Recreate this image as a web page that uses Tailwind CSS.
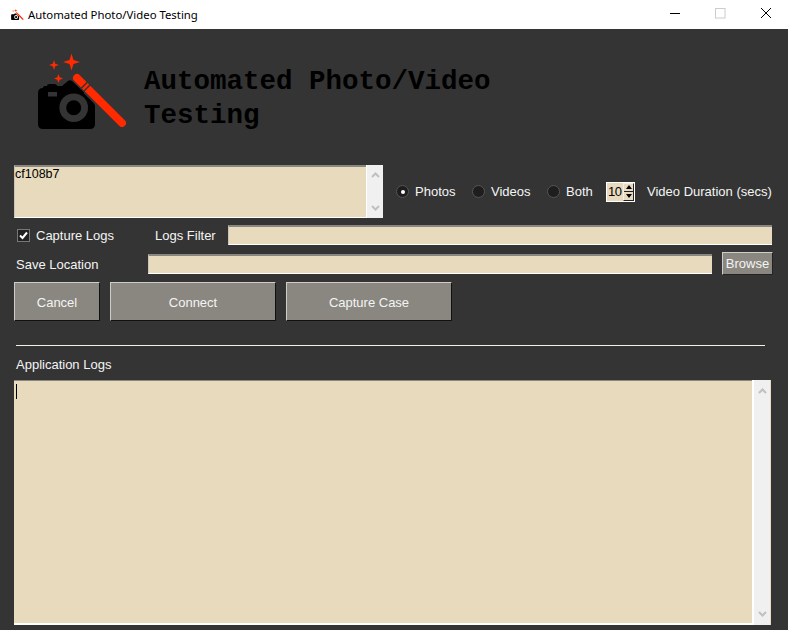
<!DOCTYPE html>
<html>
<head>
<meta charset="utf-8">
<script src="https://cdn.jsdelivr.net/npm/@tailwindcss/browser@4"></script>
</head>
<body class="m-0">
<div class="w-[788px] h-[630px] overflow-hidden flex flex-col bg-[#343434] text-[13px] leading-[16px] text-[#f4f4f4] font-['Liberation_Sans',Arial,sans-serif]">
  <!-- title bar -->
  <div class="h-[29px] shrink-0 bg-white flex items-center text-black">
    <svg class="ml-[10px] w-[14px] h-[14px]" viewBox="30 48 100 90">
      <path d="M43 88H57L68 81L95 103V124Q95 129 90 129H43Q38 129 38 124V93Q38 88 43 88Z" fill="#000"/>
      <circle cx="73.700" cy="107.700" r="14" fill="#fff"/>
      <circle cx="73.700" cy="107.700" r="8" fill="#000"/>
      <path d="M77 78L122 123" stroke="#ff2a00" stroke-width="9" stroke-linecap="round"/>
      <path d="M71.500 50L74.500 59L84 62L74.500 65L71.500 74L68.500 65L59 62L68.500 59Z" fill="#ff2a00"/>
      <path d="M52 58L54 63L59 65L54 67L52 72L50 67L45 65L50 63Z" fill="#ff2a00"/>
    </svg>
    <span class="ml-[4px] text-[11.35px] font-['Noto_Sans',sans-serif]">Automated Photo/Video Testing</span>
    <div class="ml-auto flex items-center">
      <svg class="w-[46px] h-[29px]" viewBox="0 0 46 29"><path d="M20 13.500H30" stroke="#000" stroke-width="1"/></svg>
      <svg class="w-[46px] h-[29px]" viewBox="0 0 46 29"><rect x="19.500" y="8.500" width="9.500" height="9.500" fill="none" stroke="#cccccc"/></svg>
      <svg class="w-[46px] h-[29px]" viewBox="0 0 46 29"><path d="M19 8L29 18M29 8L19 18" stroke="#000" stroke-width="1"/></svg>
    </div>
  </div>

  <!-- header -->
  <div class="h-[136px] shrink-0 flex">
    <svg class="ml-[25px] mt-[16px] w-[110px] h-[95px] shrink-0" viewBox="25 45 110 95">
      <path d="M43 88V87.500Q43 86 45 86H47Q47 84 50 84H54Q57 84 57 86L62 86L68 81Q70 79.500 72 81L92 100Q95 103 95 106V124Q95 129 90 129H43Q38 129 38 124V93Q38 88 43 88Z" fill="#000"/>
      <rect x="48" y="92" width="9" height="4.500" fill="#343434"/>
      <circle cx="73.700" cy="107.700" r="14.300" fill="#343434"/>
      <circle cx="73.700" cy="107.700" r="7.500" fill="#000"/>
      <path d="M88 89L122 123" stroke="#343434" stroke-width="12"/>
      <path d="M77 78L122 123" stroke="#ff2a00" stroke-width="8" stroke-linecap="round"/>
      <path d="M81 88.500L90 79.500M83.500 91.500L92.500 82.500" stroke="#343434" stroke-width="1.500"/>
      <path d="M71.500 53.500L73.500 60L80 62L73.500 64L71.500 70.500L69.500 64L63 62L69.500 60Z" fill="#ff2a00"/>
      <path d="M54 60L55.200 63.800L59 65L55.200 66.200L54 70L52.800 66.200L49 65L52.800 63.800Z" fill="#ff2a00"/>
      <path d="M58.500 74L59.700 77.300L63 78.500L59.700 79.700L58.500 83L57.300 79.700L54 78.500L57.300 77.300Z" fill="#ff2a00"/>
    </svg>
    <div class="ml-[9px] mt-[36px] w-[360px] text-[27.500px] leading-[34px] font-bold text-black font-['Liberation_Mono',monospace]">Automated Photo/Video<br>Testing</div>
  </div>

  <!-- device row -->
  <div class="h-[53px] shrink-0 ml-[14px] flex items-center">
    <div class="w-[369px] h-[53px] flex border-t-2 border-t-[#8a8780] border-l border-l-[#c8c4b8] border-b border-b-white bg-[#e8dabc]">
      <div class="flex-1 text-[12.500px] leading-[14px] text-black">cf108b7</div>
      <div class="w-[17px] -mt-[2px] -mb-px bg-[#f0f0f0] border-l border-l-white flex flex-col justify-between items-center py-[7px]">
        <svg class="w-[9px] h-[6px]" viewBox="0 0 9 6"><path d="M1 5L4.500 1.500L8 5" fill="none" stroke="#c0c0c0" stroke-width="2"/></svg>
        <svg class="w-[9px] h-[6px]" viewBox="0 0 9 6"><path d="M1 1L4.500 4.500L8 1" fill="none" stroke="#c0c0c0" stroke-width="2"/></svg>
      </div>
    </div>
    <div class="ml-[13px] w-[13px] h-[13px] rounded-full bg-[#1e1e1e] border border-[#555555] flex items-center justify-center"><div class="w-[4px] h-[4px] rounded-full bg-white"></div></div>
    <span class="ml-[6px] w-[51px]">Photos</span>
    <div class="ml-[6px] w-[13px] h-[13px] rounded-full bg-[#1e1e1e] border border-[#555555]"></div>
    <span class="ml-[6px] w-[54px]">Videos</span>
    <div class="ml-[2px] w-[13px] h-[13px] rounded-full bg-[#1e1e1e] border border-[#555555]"></div>
    <span class="ml-[6px] w-[41px]">Both</span>
    <div class="ml-[-1px] w-[29px] h-[20px] border border-white bg-[#e8dabc] flex text-black">
      <span class="w-[16px] pl-[1px] text-[13px] leading-[18px] tracking-[-0.5px]">10</span>
      <div class="w-[11px] flex flex-col bg-[#e8dabc] border border-t-[#f4efe2] border-l-[#f4efe2] border-r-[#222222] border-b-[#222222]">
        <div class="flex-1 flex items-center justify-center border-b border-b-[#222222]"><div class="w-0 h-0 border-x-[3px] border-x-transparent border-b-[4px] border-b-black"></div></div>
        <div class="flex-1 flex items-center justify-center"><div class="w-0 h-0 border-x-[3px] border-x-transparent border-t-[4px] border-t-black"></div></div>
      </div>
    </div>
    <span class="ml-[12px] whitespace-nowrap">Video Duration (secs)</span>
  </div>

  <!-- capture logs row -->
  <div class="h-[20px] mt-[7px] shrink-0 flex items-center">
    <div class="ml-[17px] w-[13px] h-[13px] bg-[#222222] border border-[#777777] flex items-center justify-center">
      <svg class="w-[9px] h-[9px]" viewBox="0 0 9 9"><path d="M1 4.500L3.500 7L8 1.500" fill="none" stroke="#fff" stroke-width="2"/></svg>
    </div>
    <span class="ml-[6px] w-[119px] pt-[2px]">Capture Logs</span>
    <span class="w-[73px] pt-[2px]">Logs Filter</span>
    <div class="w-[544px] h-[20px] bg-[#e8dabc] border-t-2 border-t-[#8a8780] border-b border-b-white border-l border-l-[#c8c4b8]"></div>
  </div>

  <!-- save location row -->
  <div class="h-[23px] mt-[7px] shrink-0 flex items-center">
    <span class="ml-[16px] w-[132px] pt-[2px]">Save Location</span>
    <div class="w-[564px] h-[20px] bg-[#e8dabc] border-t-2 border-t-[#8a8780] border-b border-b-white border-l border-l-[#c8c4b8]"></div>
    <div class="ml-[10px] w-[51px] h-[23px] bg-[#8a8780] border border-t-[#cfcdc8] border-l-[#cfcdc8] border-r-[#222222] border-b-[#222222] flex items-center justify-center">Browse</div>
  </div>

  <!-- buttons -->
  <div class="h-[39px] mt-[7px] ml-[14px] shrink-0 flex gap-[10px]">
    <div class="w-[86px] pt-[2px] bg-[#8a8780] border border-t-[#cfcdc8] border-l-[#cfcdc8] border-r-[#111111] border-b-[#111111] flex items-center justify-center">Cancel</div>
    <div class="w-[166px] pt-[2px] bg-[#8a8780] border border-t-[#cfcdc8] border-l-[#cfcdc8] border-r-[#111111] border-b-[#111111] flex items-center justify-center">Connect</div>
    <div class="w-[166px] pt-[2px] bg-[#8a8780] border border-t-[#cfcdc8] border-l-[#cfcdc8] border-r-[#111111] border-b-[#111111] flex items-center justify-center">Capture Case</div>
  </div>

  <!-- separator -->
  <div class="h-px mt-[24px] ml-[16px] w-[749px] shrink-0 bg-[#f4f0e8]"></div>

  <div class="h-[16px] mt-[11px] ml-[16px] shrink-0">Application Logs</div>

  <!-- logs -->
  <div class="ml-[14px] mt-[7px] w-[757px] h-[245px] shrink-0 flex bg-[#e8dabc] border-t border-t-[#8a8780] border-b-2 border-b-white">
    <div class="flex-1 pl-[2px] pt-[3px]"><div class="w-px h-[15px] bg-black"></div></div>
    <div class="w-[18px] -mt-px -mb-[2px] bg-[#f0f0f0] border-l-2 border-l-white flex flex-col justify-between items-center py-[8px]">
      <svg class="w-[9px] h-[6px]" viewBox="0 0 9 6"><path d="M1 5L4.500 1.500L8 5" fill="none" stroke="#c0c0c0" stroke-width="2"/></svg>
      <svg class="w-[9px] h-[6px]" viewBox="0 0 9 6"><path d="M1 1L4.500 4.500L8 1" fill="none" stroke="#c0c0c0" stroke-width="2"/></svg>
    </div>
    <div class="w-px -mt-px -mb-[2px] bg-[#e8dabc]"></div>
  </div>
</div>
</body>
</html>
